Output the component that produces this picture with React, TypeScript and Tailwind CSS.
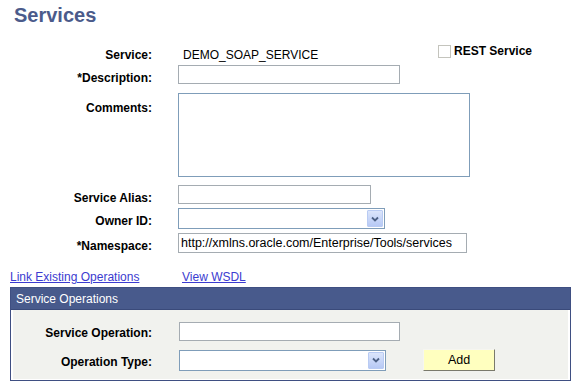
import React from 'react';

const labelBase = 'shrink-0 text-right font-bold text-black leading-[14px]';
const labelCls = `w-[152px] ${labelBase}`;
const inputCls = 'border border-[#a5acb2] bg-white outline-none px-[2px] text-[12.5px] text-black';

function Select({ width }: { width: number }) {
  return (
    <div
      className="flex h-[21px] items-center justify-end border border-[#7f9db9] bg-white p-[1px]"
      style={{ width }}
    >
      <div className="flex h-[17px] w-[16px] items-center justify-center rounded-[1px] border border-[#b9cbf3] bg-gradient-to-b from-[#dbe5fb] to-[#b7c9f5]">
        <svg width="8" height="6" viewBox="0 0 8 6">
          <path d="M1 1.5 L4 4.5 L7 1.5" fill="none" stroke="#4d6185" strokeWidth="1.8" />
        </svg>
      </div>
    </div>
  );
}

export default function App() {
  return (
    <div className="h-[385px] w-[585px] overflow-hidden bg-white font-['Liberation_Sans',Arial,sans-serif] text-[12px] text-black">
      <h1 className="pl-[14px] pt-[3px] text-[20px] font-bold leading-[24px] text-[#4b5b8b]">Services</h1>

      {/* Service */}
      <div className="mt-[19px] flex h-[18px] items-center">
        <div className={labelCls}>Service:</div>
        <div className="w-[286px] shrink-0 pl-[31px] leading-[14px]">DEMO_SOAP_SERVICE</div>
        <div className="-mt-[2px] flex items-center gap-[3px] self-start">
          <div className="h-[13px] w-[13px] border border-[#c4c4bd] bg-white" />
          <span className="font-bold leading-[14px]">REST Service</span>
        </div>
      </div>

      {/* Description */}
      <div className="mt-[1px] flex h-[19px] items-center">
        <div className={`${labelCls} pt-[6px]`}>*Description:</div>
        <input className={`${inputCls} ml-[26px] h-[19px] w-[222px]`} />
      </div>

      {/* Comments */}
      <div className="mt-[9px] flex">
        <div className={`${labelCls} pt-[8px]`}>Comments:</div>
        <textarea className="ml-[26px] h-[84px] w-[292px] resize-none border border-[#7f9db9] bg-white outline-none" />
      </div>

      {/* Service Alias */}
      <div className="mt-[8px] flex h-[19px] items-center">
        <div className={`${labelCls} pt-[7px]`}>Service Alias:</div>
        <input className={`${inputCls} ml-[26px] h-[19px] w-[193px]`} />
      </div>

      {/* Owner ID */}
      <div className="mt-[4px] flex h-[21px] items-center">
        <div className={`${labelCls} pt-[5px]`}>Owner ID:</div>
        <div className="ml-[26px]">
          <Select width={207} />
        </div>
      </div>

      {/* Namespace */}
      <div className="mt-[4px] flex h-[20px] items-center">
        <div className={`${labelCls} pt-[5px]`}>*Namespace:</div>
        <input
          className={`${inputCls} ml-[26px] h-[20px] w-[289px]`}
          defaultValue="http://xmlns.oracle.com/Enterprise/Tools/services"
        />
      </div>

      {/* Links */}
      <div className="mt-[17px] flex h-[14px] items-center pl-[10px] leading-[14px]">
        <a href="#" className="w-[172px] text-[#3b3bd0] underline">Link Existing Operations</a>
        <a href="#" className="text-[#3b3bd0] underline">View WSDL</a>
      </div>

      {/* Service Operations */}
      <div className="ml-[10px] mt-[3px] h-[94px] w-[561px] border border-[#3f4f82] bg-white">
        <div className="flex h-[22px] items-center border-b border-[#3a4a7a] bg-[#485a8c] pl-[5px] text-white">
          Service Operations
        </div>
        <div className="px-[2px] pb-[1px]">
          <div className="h-[69px] bg-[#f1f2ee] pt-[12px]">
            <div className="flex h-[19px] items-center">
              <div className={`w-[139px] ${labelBase} pt-[3px]`}>Service Operation:</div>
              <input className={`${inputCls} ml-[27px] h-[19px] w-[221px]`} />
            </div>
            <div className="mt-[8px] flex h-[22px] items-center">
              <div className={`w-[139px] ${labelBase} pt-[4px]`}>Operation Type:</div>
              <div className="ml-[27px]">
                <Select width={207} />
              </div>
              <button className="ml-[37px] h-[22px] w-[72px] border border-t-[#f6f6f0] border-l-[#f6f6f0] border-b-[#7a7a6c] border-r-[#7a7a6c] bg-[#ffffbf] text-[12.5px] text-black">
                Add
              </button>
            </div>
          </div>
        </div>
      </div>
    </div>
  );
}
